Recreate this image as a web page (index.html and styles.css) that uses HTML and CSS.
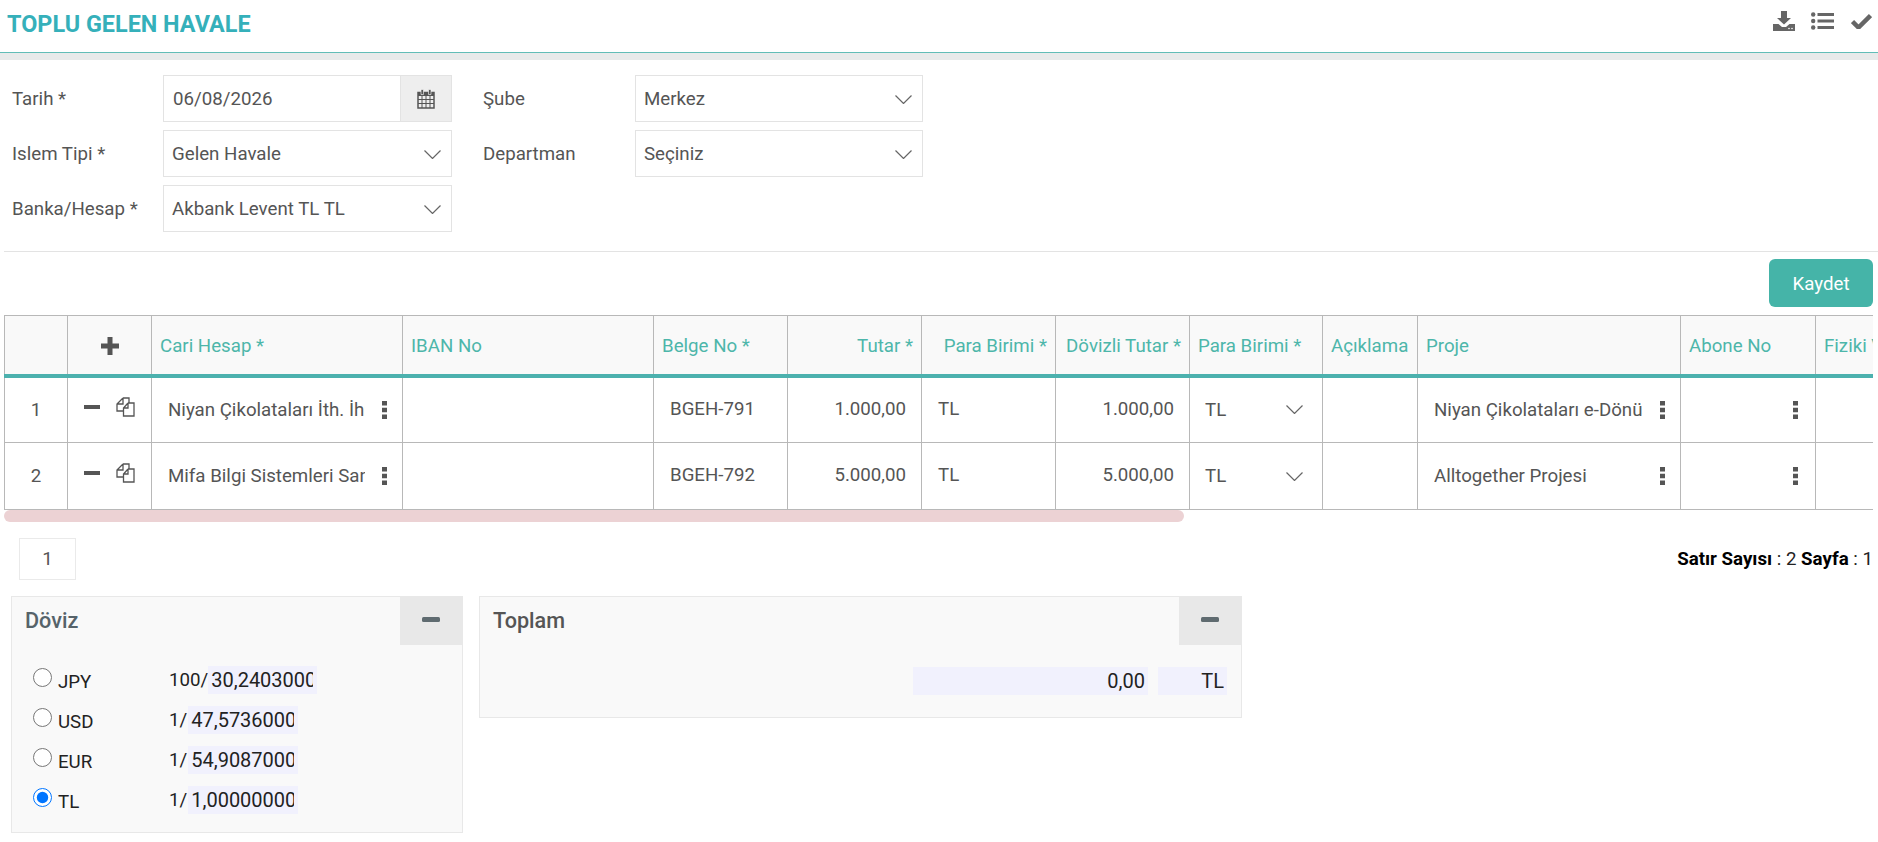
FILE: index.html
```html
<!DOCTYPE html>
<html lang="tr">
<head>
    <meta charset="UTF-8">
    <title>Toplu Gelen Havale</title>
    <link rel="stylesheet" href="styles.css">
</head>
<body>
    <header class="page-header">
        <h1>TOPLU GELEN HAVALE</h1>
        <div class="header-actions">
            <svg class="icon-download" viewBox="0 0 22 20"><path d="M8 0h6v7h4l-7 6.500L4 7h4z"/><path d="M0 13h5.500l3.500 3h4l3.500-3H22v7H0z"/><circle cx="16" cy="17.500" r=".8" fill="#fff"/><circle cx="19" cy="17.500" r=".8" fill="#fff"/></svg>
            <svg class="icon-list" viewBox="0 0 23 18"><circle cx="2.200" cy="2.500" r="2.200"/><circle cx="2.200" cy="9" r="2.200"/><circle cx="2.200" cy="15.500" r="2.200"/><path d="M6.500 1h16.500v3H6.500zM6.500 7.500h16.500v3H6.500zM6.500 14h16.500v3H6.500z"/></svg>
            <svg class="icon-check" viewBox="0 0 21 16"><path d="M1.500 8.500l6 6L19.500 2.500" fill="none" stroke="#666" stroke-width="4.500"/></svg>
        </div>
    </header>
    <div class="header-strip"></div>

    <section class="form-grid">
        <label>Tarih *</label>
        <div class="field date-field">
            <input class="field-input" type="text" value="06/08/2026">
            <span class="date-addon">
                <svg class="icon-calendar" viewBox="0 0 18 20"><path d="M1 3.500h16v15.500H1z" fill="none" stroke="#555" stroke-width="1.500"/><path d="M1 3.500h16v3.500H1z"/><path d="M4 0.500h2.500v5H4zM11.500 0.500H14v5h-2.500z" stroke="#fff" stroke-width=".6"/><path d="M1 10.500h16M1 14.500h16M5 7v12M9 7v12M13 7v12" stroke="#555"/></svg>
            </span>
        </div>
        <label>Şube</label>
        <div class="field select-field">
            <span>Merkez</span>
            <svg class="chevron" viewBox="0 0 17 9"><path d="M.5.5l8 8 8-8"/></svg>
        </div>

        <label>Islem Tipi *</label>
        <div class="field select-field">
            <span>Gelen Havale</span>
            <svg class="chevron" viewBox="0 0 17 9"><path d="M.5.5l8 8 8-8"/></svg>
        </div>
        <label>Departman</label>
        <div class="field select-field">
            <span>Seçiniz</span>
            <svg class="chevron" viewBox="0 0 17 9"><path d="M.5.5l8 8 8-8"/></svg>
        </div>

        <label>Banka/Hesap *</label>
        <div class="field select-field">
            <span>Akbank Levent TL TL</span>
            <svg class="chevron" viewBox="0 0 17 9"><path d="M.5.5l8 8 8-8"/></svg>
        </div>
    </section>

    <hr class="divider">

    <div class="save-row">
        <button class="save-btn">Kaydet</button>
    </div>

    <div class="table-wrap">
        <table class="grid-table">
            <colgroup>
                <col class="w-63"><col class="w-84"><col class="w-251"><col class="w-251">
                <col class="w-134"><col class="w-134"><col class="w-134"><col class="w-134">
                <col class="w-133"><col class="w-95"><col class="w-263"><col class="w-135"><col class="w-150">
            </colgroup>
            <thead>
                <tr>
                    <th></th>
                    <th class="center"><svg class="icon-plus" viewBox="0 0 18 18"><path d="M6.500 0h5v6.500H18v5h-6.500V18h-5v-6.500H0v-5h6.500z"/></svg></th>
                    <th>Cari Hesap *</th>
                    <th>IBAN No</th>
                    <th>Belge No *</th>
                    <th class="right">Tutar *</th>
                    <th class="right">Para Birimi *</th>
                    <th class="right">Dövizli Tutar *</th>
                    <th>Para Birimi *</th>
                    <th>Açıklama</th>
                    <th>Proje</th>
                    <th>Abone No</th>
                    <th>Fiziki Virman</th>
                </tr>
            </thead>
            <tbody>
                <tr>
                    <td class="center">1</td>
                    <td>
                        <div class="row-tools">
                            <svg class="icon-minus" viewBox="0 0 16 4"><path d="M0 0h16v4H0z"/></svg>
                            <svg class="icon-copy" viewBox="0 0 19 20"><path d="M7 1H13V6M7 1L1 7V14H7.500M7 1V7H1M12 6H18V19H7.500V11L12 6M12 6V11H7.500" fill="none" stroke="#555" stroke-width="1.300"/></svg>
                        </div>
                    </td>
                    <td>
                        <div class="lookup">
                            <span class="lookup-text">Niyan Çikolataları İth. İhr. Ltd. Şti.</span>
                            <svg class="icon-dots" viewBox="0 0 5 18"><path d="M0 0h5v4.500H0zM0 6.700h5v4.500H0zM0 13.500h5V18H0z"/></svg>
                        </div>
                    </td>
                    <td></td>
                    <td class="pad">BGEH-791</td>
                    <td class="pad right">1.000,00</td>
                    <td class="pad">TL</td>
                    <td class="pad right">1.000,00</td>
                    <td>
                        <div class="cell-select">
                            <span>TL</span>
                            <svg class="chevron" viewBox="0 0 17 9"><path d="M.5.5l8 8 8-8"/></svg>
                        </div>
                    </td>
                    <td></td>
                    <td>
                        <div class="lookup">
                            <span class="lookup-text">Niyan Çikolataları e-Dönüşüm Projesi</span>
                            <svg class="icon-dots" viewBox="0 0 5 18"><path d="M0 0h5v4.500H0zM0 6.700h5v4.500H0zM0 13.500h5V18H0z"/></svg>
                        </div>
                    </td>
                    <td>
                        <div class="lookup bare">
                            <span class="lookup-text"></span>
                            <svg class="icon-dots" viewBox="0 0 5 18"><path d="M0 0h5v4.500H0zM0 6.700h5v4.500H0zM0 13.500h5V18H0z"/></svg>
                        </div>
                    </td>
                    <td></td>
                </tr>
                <tr>
                    <td class="center">2</td>
                    <td>
                        <div class="row-tools">
                            <svg class="icon-minus" viewBox="0 0 16 4"><path d="M0 0h16v4H0z"/></svg>
                            <svg class="icon-copy" viewBox="0 0 19 20"><path d="M7 1H13V6M7 1L1 7V14H7.500M7 1V7H1M12 6H18V19H7.500V11L12 6M12 6V11H7.500" fill="none" stroke="#555" stroke-width="1.300"/></svg>
                        </div>
                    </td>
                    <td>
                        <div class="lookup">
                            <span class="lookup-text">Mifa Bilgi Sistemleri San. ve Tic. A.Ş.</span>
                            <svg class="icon-dots" viewBox="0 0 5 18"><path d="M0 0h5v4.500H0zM0 6.700h5v4.500H0zM0 13.500h5V18H0z"/></svg>
                        </div>
                    </td>
                    <td></td>
                    <td class="pad">BGEH-792</td>
                    <td class="pad right">5.000,00</td>
                    <td class="pad">TL</td>
                    <td class="pad right">5.000,00</td>
                    <td>
                        <div class="cell-select">
                            <span>TL</span>
                            <svg class="chevron" viewBox="0 0 17 9"><path d="M.5.5l8 8 8-8"/></svg>
                        </div>
                    </td>
                    <td></td>
                    <td>
                        <div class="lookup">
                            <span class="lookup-text">Alltogether Projesi</span>
                            <svg class="icon-dots" viewBox="0 0 5 18"><path d="M0 0h5v4.500H0zM0 6.700h5v4.500H0zM0 13.500h5V18H0z"/></svg>
                        </div>
                    </td>
                    <td>
                        <div class="lookup bare">
                            <span class="lookup-text"></span>
                            <svg class="icon-dots" viewBox="0 0 5 18"><path d="M0 0h5v4.500H0zM0 6.700h5v4.500H0zM0 13.500h5V18H0z"/></svg>
                        </div>
                    </td>
                    <td></td>
                </tr>
            </tbody>
        </table>
    </div>
    <div class="scroll-thumb"></div>

    <div class="pager-row">
        <span class="page-box">1</span>
        <span class="pager-info"><b>Satır Sayısı</b> : 2 <b>Sayfa</b> : 1</span>
    </div>

    <div class="panels">
        <section class="panel panel-doviz">
            <div class="panel-head">
                <h2>Döviz</h2>
                <span class="panel-toggle"><svg class="icon-panel-minus" viewBox="0 0 18 5"><rect width="18" height="5" rx="1.500"/></svg></span>
            </div>
            <div class="rates">
                <div class="rate-row">
                    <input class="rate-radio" type="radio" name="doviz">
                    <span class="rate-code">JPY</span>
                    <span class="rate-unit">100/</span>
                    <input class="rate-input wide" type="text" value="30,24030000">
                </div>
                <div class="rate-row">
                    <input class="rate-radio" type="radio" name="doviz">
                    <span class="rate-code">USD</span>
                    <span class="rate-unit">1/</span>
                    <input class="rate-input" type="text" value="47,57360000">
                </div>
                <div class="rate-row">
                    <input class="rate-radio" type="radio" name="doviz">
                    <span class="rate-code">EUR</span>
                    <span class="rate-unit">1/</span>
                    <input class="rate-input" type="text" value="54,90870000">
                </div>
                <div class="rate-row">
                    <input class="rate-radio" type="radio" name="doviz" checked>
                    <span class="rate-code">TL</span>
                    <span class="rate-unit">1/</span>
                    <input class="rate-input" type="text" value="1,00000000">
                </div>
            </div>
        </section>

        <section class="panel panel-toplam">
            <div class="panel-head">
                <h2 class="title-grey">Toplam</h2>
                <span class="panel-toggle"><svg class="icon-panel-minus" viewBox="0 0 18 5"><rect width="18" height="5" rx="1.500"/></svg></span>
            </div>
            <div class="totals">
                <input class="total-input amount" type="text" value="0,00">
                <input class="total-input currency" type="text" value="TL">
            </div>
        </section>
    </div>
</body>
</html>
```

FILE: styles.css
```css
/* Base styles */
* {
    margin: 0;
    padding: 0;
    box-sizing: border-box;
}

:root {
    --teal: #4db6aa;
    --teal-dark: #4cb1ae;
    --text: #555;
    --line: #b8b8b8;
    --soft-line: #e3e3e3;
    --input-bg: #f1f1fd;
}

body {
    font-family: Roboto, "Liberation Sans", sans-serif;
    font-size: 18.7px;
    color: var(--text);
    background: #fff;
    overflow: hidden;
}

svg {
    display: block;
    flex: none;
}

/* Header */
.page-header {
    height: 53px;
    display: flex;
    justify-content: space-between;
    align-items: flex-start;
    padding: 0 6px 0 7px;
    border-bottom: 1px solid #62bdb7;
}

.page-header h1 {
    font-size: 23.4px;
    font-weight: 700;
    line-height: 49px;
    color: #35b0ba;
}

.header-actions {
    display: flex;
    align-items: center;
    gap: 16px;
    padding-top: 11px;
    fill: #666;
}

.icon-download { width: 22px; height: 20px; }
.icon-list { width: 23px; height: 18px; }
.icon-check { width: 21px; height: 16px; margin-left: 1px; }

.header-strip {
    height: 7px;
    background: #e8eaea;
}

/* Form */
.form-grid {
    display: grid;
    grid-template-columns: 151px 289px 183px 288px;
    grid-auto-rows: 47px;
    row-gap: 8px;
    padding: 15px 0 0 12px;
}

.form-grid label {
    align-self: center;
    padding-top: 1px;
}

.form-grid label:nth-of-type(2),
.form-grid label:nth-of-type(4) {
    margin-left: 31px;
}

.field {
    border: 1px solid var(--soft-line);
    display: flex;
    align-items: center;
}

.field-input {
    flex: 1;
    min-width: 0;
    height: 100%;
    border: 0;
    outline: 0;
    padding: 1px 0 0 9px;
    font: inherit;
    color: inherit;
}

.date-addon {
    width: 51px;
    height: 100%;
    background: #eee;
    display: flex;
    align-items: center;
    justify-content: center;
    border-left: 1px solid var(--soft-line);
}

.icon-calendar {
    width: 18px;
    height: 20px;
    fill: #555;
}

.select-field {
    justify-content: space-between;
    padding: 1px 10px 0 8px;
}

.chevron {
    width: 17px;
    height: 9px;
    fill: none;
    stroke: #666;
    stroke-width: 1.200;
}

.divider {
    border: 0;
    border-top: 1px solid var(--soft-line);
    margin: 19px 0 7px 4px;
}

.save-row {
    display: flex;
    justify-content: flex-end;
    padding-right: 5px;
    margin-bottom: 8px;
}

.save-btn {
    width: 104px;
    height: 48px;
    padding-top: 1px;
    border: 0;
    border-radius: 6px;
    background: #45b4a8;
    color: #fff;
    font: inherit;
}

/* Table */
.table-wrap {
    margin: 0 5px 0 4px;
    overflow: hidden;
}

.grid-table {
    width: 1961px;
    table-layout: fixed;
    border-collapse: collapse;
}

.w-63 { width: 63px; }
.w-84 { width: 84px; }
.w-95 { width: 95px; }
.w-133 { width: 133px; }
.w-134 { width: 134px; }
.w-135 { width: 135px; }
.w-150 { width: 150px; }
.w-251 { width: 251px; }
.w-263 { width: 263px; }

.grid-table th,
.grid-table td {
    border: 1px solid var(--line);
}

.grid-table th {
    height: 60px;
    padding: 2px 8px 0;
    background: #f9f9f9;
    border-bottom: 4px solid var(--teal-dark);
    color: var(--teal);
    font-weight: 400;
    text-align: left;
    white-space: nowrap;
    overflow: hidden;
}

.grid-table td {
    height: 67px;
}

.grid-table .center { text-align: center; }
.grid-table .right { text-align: right; }

.grid-table td.pad {
    padding: 0 15px 2px 16px;
}

.icon-plus {
    width: 18px;
    height: 18px;
    margin: 0 auto;
    fill: #555;
}

.row-tools {
    display: flex;
    align-items: flex-start;
    gap: 16px;
    padding: 0 0 6px 16px;
}

.icon-minus {
    width: 16px;
    height: 4px;
    margin-top: 8px;
    fill: #555;
}

.icon-copy {
    width: 19px;
    height: 20px;
}

.lookup {
    display: flex;
    align-items: center;
    padding: 0 15px 0 16px;
}

.lookup.bare {
    padding-right: 17px;
}

.lookup-text {
    flex: 1;
    min-width: 0;
    white-space: nowrap;
    overflow: hidden;
    margin-right: 17px;
}

.icon-dots {
    width: 5px;
    height: 18px;
    fill: #555;
}

.cell-select {
    display: flex;
    justify-content: space-between;
    align-items: center;
    padding: 0 19px 0 15px;
}

.scroll-thumb {
    width: 1180px;
    height: 12px;
    margin-left: 4px;
    border-radius: 7px;
    background: #ecd2d4;
}

/* Pager */
.pager-row {
    display: flex;
    justify-content: space-between;
    align-items: center;
    padding: 16px 5px 0 19px;
}

.page-box {
    width: 57px;
    height: 42px;
    border: 1px solid #eaeaea;
    display: flex;
    align-items: center;
    justify-content: center;
}

.pager-info {
    color: #222;
}

.pager-info b {
    color: #000;
}

/* Panels */
.panels {
    display: flex;
    align-items: flex-start;
    gap: 16px;
    padding: 16px 0 0 11px;
}

.panel {
    background: #f9f9f9;
    border: 1px solid #e8e8e8;
}

.panel-doviz {
    width: 452px;
    height: 237px;
}

.panel-toplam {
    width: 763px;
    height: 122px;
}

.panel-head {
    height: 48px;
    display: flex;
    justify-content: space-between;
    padding-left: 13px;
}

.panel-head h2 {
    font-size: 21.6px;
    font-weight: 500;
    line-height: 48px;
    color: #56636a;
}

.panel-head .title-grey {
    color: #555;
}

.panel-toggle {
    width: 62px;
    height: 48px;
    background: #e8e8e8;
    display: flex;
    justify-content: center;
    padding-top: 20px;
    fill: #5f6b70;
}

.icon-panel-minus {
    width: 18px;
    height: 5px;
}

.rates {
    display: flex;
    flex-direction: column;
    gap: 12px;
    padding: 21px 0 0 21px;
}

.rate-row {
    display: flex;
    align-items: center;
    height: 28px;
    color: #222;
}

.rate-radio {
    width: 19px;
    height: 19px;
    margin: 0 6px 5px 0;
}

.rate-code {
    width: 111px;
    padding-top: 3px;
}

.rate-unit {
    white-space: nowrap;
}

.rate-input {
    width: 110px;
    height: 28px;
    border: 0;
    outline: 0;
    background: var(--input-bg);
    padding: 0 4px 0 3px;
    margin-left: 1px;
    font-family: inherit;
    font-size: 20px;
    color: #222;
}

.rate-input.wide {
    width: 109px;
    margin-left: 0;
}

.totals {
    display: flex;
    justify-content: flex-end;
    gap: 10px;
    padding: 22px 14px 0 0;
}

.total-input {
    height: 28px;
    border: 0;
    outline: 0;
    background: var(--input-bg);
    padding: 0 3px;
    font-family: inherit;
    font-size: 20px;
    color: #222;
    text-align: right;
}

.amount { width: 235px; }
.currency { width: 69px; }
```
